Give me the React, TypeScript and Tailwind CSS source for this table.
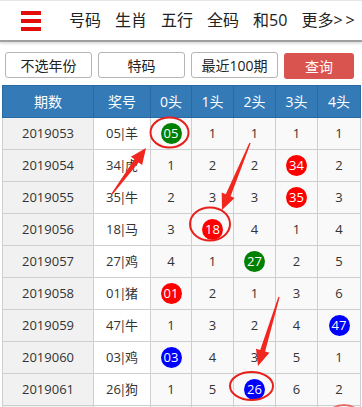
import React from "react";

type Cell = number | { n: string; c: "g" | "r" | "b" };

const rows: { qi: string; jiang: string; cells: Cell[] }[] = [
  { qi: "2019053", jiang: "05|羊", cells: [{ n: "05", c: "g" }, 1, 1, 1, 1] },
  { qi: "2019054", jiang: "34|虎", cells: [1, 2, 2, { n: "34", c: "r" }, 2] },
  { qi: "2019055", jiang: "35|牛", cells: [2, 3, 3, { n: "35", c: "r" }, 3] },
  { qi: "2019056", jiang: "18|马", cells: [3, { n: "18", c: "r" }, 4, 1, 4] },
  { qi: "2019057", jiang: "27|鸡", cells: [4, 1, { n: "27", c: "g" }, 2, 5] },
  { qi: "2019058", jiang: "01|猪", cells: [{ n: "01", c: "r" }, 2, 1, 3, 6] },
  { qi: "2019059", jiang: "47|牛", cells: [1, 3, 2, 4, { n: "47", c: "b" }] },
  { qi: "2019060", jiang: "03|鸡", cells: [{ n: "03", c: "b" }, 4, 3, 5, 1] },
  { qi: "2019061", jiang: "26|狗", cells: [1, 5, { n: "26", c: "b" }, 6, 2] },
  // next row only peeks in at the bottom edge
  { qi: "", jiang: "", cells: [0, 0, 0, 0, 0] },
];

const ballColor = {
  g: "bg-[#008000]",
  r: "bg-[#ff0000]",
  b: "bg-[#0000ff]",
};

// tapered arrow like the ones drawn by screenshot tools
const arrowPoints = (x1: number, y1: number, x2: number, y2: number) => {
  const len = Math.hypot(x2 - x1, y2 - y1);
  const ux = (x2 - x1) / len;
  const uy = (y2 - y1) / len;
  const nx = -uy;
  const ny = ux;
  const bx = x2 - ux * 16;
  const by = y2 - uy * 16;
  const pts = [
    [x1 + nx * 0.6, y1 + ny * 0.6],
    [bx + nx * 2.6, by + ny * 2.6],
    [bx + nx * 7, by + ny * 7],
    [x2, y2],
    [bx - nx * 7, by - ny * 7],
    [bx - nx * 2.6, by - ny * 2.6],
    [x1 - nx * 0.6, y1 - ny * 0.6],
  ];
  return pts.map((p) => p[0].toFixed(1) + "," + p[1].toFixed(1)).join(" ");
};

const App = () => {
  const nav = ["号码", "生肖", "五行", "全码", "和50"];
  const heads = ["0头", "1头", "2头", "3头", "4头"];

  return (
    <div
      className="relative w-[362px] h-[407px] overflow-hidden bg-white text-[#333]"
      style={{ fontFamily: '"Open Sans", "Noto Sans CJK SC", sans-serif' }}
    >
      {/* top bar */}
      <div className="h-[42px] flex items-center border-t border-[#e6e6e6] border-b-2 border-b-[#a0a0a0] shadow-[0_2px_2px_#e0e0e0]">
        <div className="w-[69px] flex flex-col gap-[4px] pl-[21px]">
          <span className="block w-[20px] h-[4px] bg-[#e30d0d]" />
          <span className="block w-[20px] h-[4px] bg-[#e30d0d]" />
          <span className="block w-[20px] h-[4px] bg-[#e30d0d]" />
        </div>
        <div className="flex gap-[14px] text-[16px] text-[#222] leading-none -mt-[1px]">
          {nav.map((item) => (
            <span key={item}>{item}</span>
          ))}
          <span>
            更多<span className="tracking-[3px]">&gt;&gt;</span>
          </span>
        </div>
      </div>

      {/* filter buttons */}
      <div className="flex mt-[10px] pl-[5px] gap-[6px] text-[14px]">
        <button className="w-[87px] h-[26px] border border-[#b5b5b5] rounded-[3px] bg-white text-[#222]">
          不选年份
        </button>
        <button className="w-[87px] h-[26px] border border-[#b5b5b5] rounded-[3px] bg-white text-[#222]">
          特码
        </button>
        <button className="w-[87px] h-[26px] border border-[#b5b5b5] rounded-[3px] bg-white text-[#222]">
          最近100期
        </button>
        <button className="w-[70px] h-[26px] mt-[1px] rounded-[3px] bg-[#d9534f] text-white">
          查询
        </button>
      </div>

      {/* results table */}
      <table className="table-fixed border-collapse ml-[2px] mt-[6px] w-[358px] text-[13px]">
        <colgroup>
          <col className="w-[91px]" />
          <col className="w-[57px]" />
          <col className="w-[41px]" />
          <col className="w-[42px]" />
          <col className="w-[42px]" />
          <col className="w-[42px]" />
          <col className="w-[43px]" />
        </colgroup>
        <thead>
          <tr className="h-[32px] bg-[#337ab7] text-white text-[14px]">
            <th className="font-normal border border-[#2a6aa3]">期数</th>
            <th className="font-normal border border-[#2a6aa3]">奖号</th>
            {heads.map((h) => (
              <th key={h} className="font-normal border border-[#2a6aa3]">
                {h}
              </th>
            ))}
          </tr>
        </thead>
        <tbody>
          {rows.map((row, r) => {
            const [num, zodiac] = row.jiang.split("|");
            return (
              <tr key={r} className="h-[32px]">
                <td className="text-center border border-[#cfcfcf] bg-[#f1f1f1]">{row.qi}</td>
                <td className="text-center border border-[#cfcfcf] bg-white">
                  {row.jiang && (
                    <>
                      {num}
                      <span className="-mx-[1.5px]">|</span>
                      {zodiac}
                    </>
                  )}
                </td>
                {row.cells.map((cell, i) => (
                  <td key={i} className="text-center border border-[#cfcfcf] bg-[#f9f9f9]">
                    {typeof cell === "number" ? (
                      cell > 0 ? cell : ""
                    ) : (
                      <span
                        className={
                          "inline-flex items-center justify-center w-[21px] h-[21px] rounded-full text-white text-[13px] leading-none align-middle " +
                          ballColor[cell.c]
                        }
                      >
                        {cell.n}
                      </span>
                    )}
                  </td>
                ))}
              </tr>
            );
          })}
        </tbody>
      </table>

      {/* red marks drawn over the screenshot */}
      <svg className="absolute inset-0 pointer-events-none" width="362" height="407">
        <ellipse cx="169.5" cy="132.5" rx="19" ry="15" fill="none" stroke="#e8201c" strokeWidth="2" />
        <ellipse cx="210" cy="224" rx="20" ry="16.5" fill="none" stroke="#e8201c" strokeWidth="2" />
        <ellipse cx="251.5" cy="386" rx="21.5" ry="14" fill="none" stroke="#e8201c" strokeWidth="2" />
        <ellipse cx="344" cy="420" rx="18" ry="15" fill="none" stroke="#e8201c" strokeWidth="2" opacity="0.6" />
        <polygon points={arrowPoints(112, 194, 146, 148)} fill="#f0261f" />
        <polygon points={arrowPoints(250, 143, 222, 210)} fill="#f0261f" />
        <polygon points={arrowPoints(279, 297, 258, 366)} fill="#f0261f" />
      </svg>
    </div>
  );
};

export default App;
